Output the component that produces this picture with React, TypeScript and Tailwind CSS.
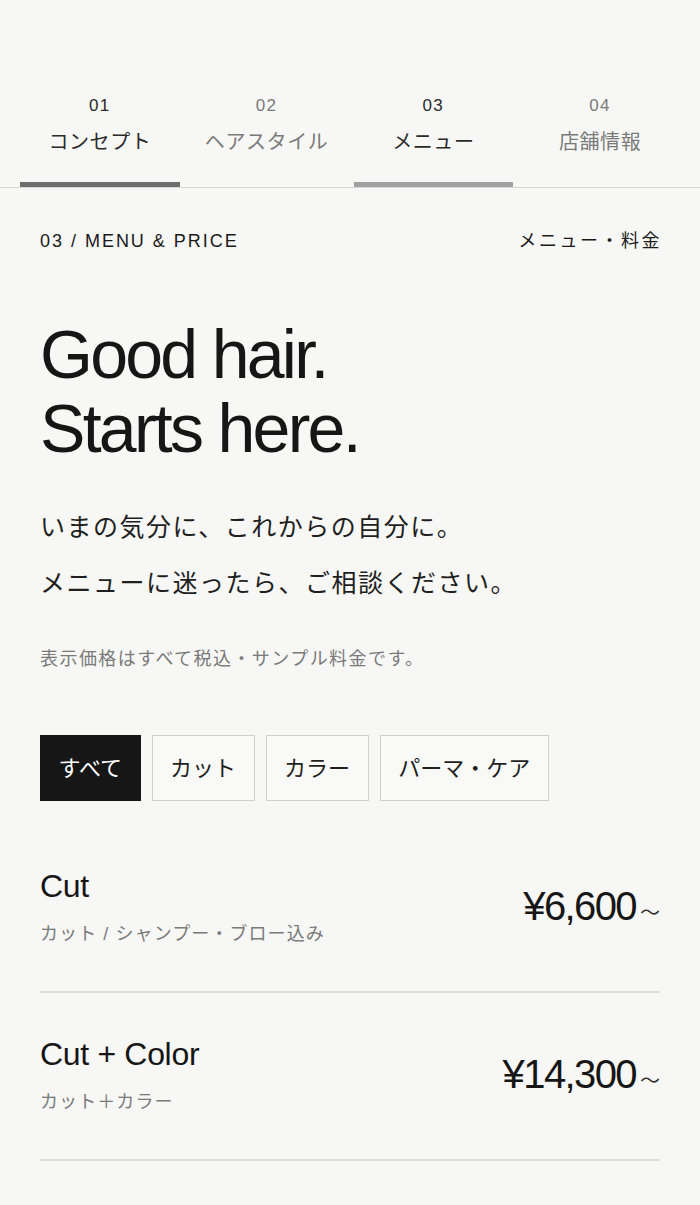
const font = '[font-family:"Liberation_Sans","Noto_Sans_CJK_JP",sans-serif]'

const tabs = [
  { no: '01', label: 'コンセプト', active: true, bar: 'bg-[#6e6e6e]' },
  { no: '02', label: 'ヘアスタイル', active: false, bar: 'bg-transparent' },
  { no: '03', label: 'メニュー', active: true, bar: 'bg-[#a0a0a0]' },
  { no: '04', label: '店舗情報', active: false, bar: 'bg-transparent' },
]

const filters = ['すべて', 'カット', 'カラー', 'パーマ・ケア']

const items = [
  { name: 'Cut', note: 'カット / シャンプー・ブロー込み', price: '¥6,600' },
  { name: 'Cut + Color', note: 'カット＋カラー', price: '¥14,300' },
]

export default function App() {
  return (
    <div className={`min-h-[1205px] bg-[#f7f7f5] text-[#1a1a1a] ${font}`}>
      <nav className="border-b border-[#d6d6d6] pt-[94px]">
        <div className="grid grid-cols-4 gap-[7px] px-5">
          {tabs.map((t) => (
            <div key={t.no} className="flex flex-col items-center">
              <span
                className={`text-[17px] leading-[24px] tracking-[0.08em] ${t.active ? 'text-[#2b2b2b]' : 'text-[#7a7a7a]'}`}
              >
                {t.no}
              </span>
              <span
                className={`mt-2.5 text-[20px] leading-[28px] tracking-[0.03em] ${t.active ? 'text-[#2b2b2b]' : 'text-[#7a7a7a]'}`}
              >
                {t.label}
              </span>
              <div className={`mt-[26px] h-[5px] w-full ${t.bar}`} />
            </div>
          ))}
        </div>
      </nav>

      <main className="px-10">
        <div className="mt-[41px] flex items-center justify-between text-[18px] leading-[24px] tracking-[0.11em]">
          <span>03 / MENU &amp; PRICE</span>
          <span className="-mr-[2px] tracking-[0.14em]">メニュー・料金</span>
        </div>

        <h1 className="mt-[64px] text-[68px] leading-[74px] tracking-[-0.04em] text-[#161616]">
          Good hair.
          <br />
          Starts here.
        </h1>

        <div className="mt-[34px] text-[25px] leading-[56px] tracking-[0.06em] text-[#1f1f1f]">
          <p>いまの気分に、これからの自分に。</p>
          <p>メニューに迷ったら、ご相談ください。</p>
        </div>

        <p className="mt-9 text-[18px] leading-[24px] tracking-[0.08em] text-[#7a7a7a]">
          表示価格はすべて税込・サンプル料金です。
        </p>

        <div className="mt-16 flex gap-[11px]">
          {filters.map((f, i) => (
            <button
              key={f}
              className={`h-[66px] border px-[17.5px] text-[22px] ${
                i === 0
                  ? 'border-[#161616] bg-[#161616] text-white'
                  : 'border-[#cfcfcf] bg-[#f9f9f7] text-[#1f1f1f]'
              }`}
            >
              {f}
            </button>
          ))}
        </div>

        <ul className="mt-6">
          {items.map((it) => (
            <li
              key={it.name}
              className="flex items-center justify-between border-b-2 border-[#dedede] pt-[41px] pb-[45px]"
            >
              <div>
                <div className="text-[32px] leading-[40px] tracking-[-0.01em] text-[#161616]">{it.name}</div>
                <div className="mt-4 text-[18px] leading-[24px] tracking-[0.06em] text-[#7a7a7a]">{it.note}</div>
              </div>
              <div className="flex items-baseline">
                <span className="text-[40px] leading-[48px] tracking-[-0.04em] text-[#161616]">{it.price}</span>
                <span className="ml-1 text-[20px] text-[#333]">〜</span>
              </div>
            </li>
          ))}
        </ul>
      </main>
    </div>
  )
}
